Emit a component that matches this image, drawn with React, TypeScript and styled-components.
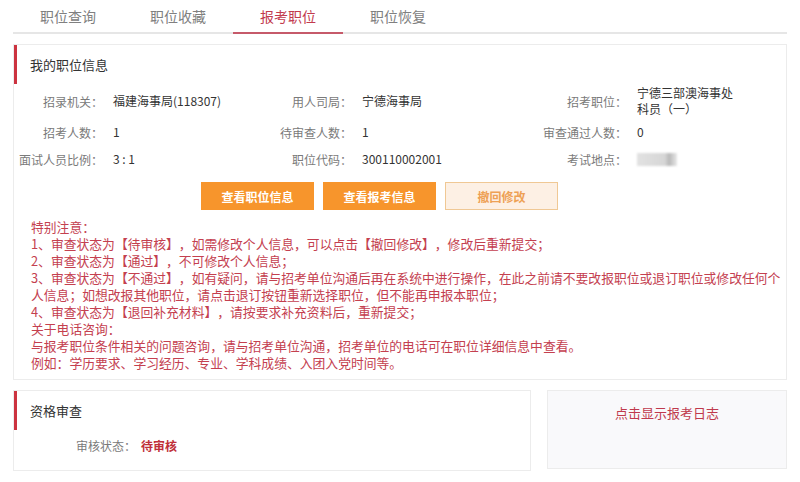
import React from "react";
import styled, { createGlobalStyle } from "styled-components";

const GlobalStyle = createGlobalStyle`
  html, body {
    margin: 0;
    padding: 0;
    background: #fff;
    font-family: "Noto Sans CJK SC", "Noto Sans", sans-serif;
    text-spacing-trim: space-all;
  }
`;

const tabs = ["职位查询", "职位收藏", "报考职位", "职位恢复"];

const info: { label: string; value: React.ReactNode }[][] = [
  [
    { label: "招录机关：", value: "福建海事局(118307)" },
    { label: "用人司局：", value: "宁德海事局" },
    {
      label: "招考职位：",
      value: (
        <>
          宁德三部澳海事处
          <br />
          科员（一）
        </>
      ),
    },
  ],
  [
    { label: "招考人数：", value: "1" },
    { label: "待审查人数：", value: "1" },
    { label: "审查通过人数：", value: "0" },
  ],
  [
    { label: "面试人员比例：", value: "3 : 1" },
    { label: "职位代码：", value: "300110002001" },
    { label: "考试地点：", value: <Blurred /> },
  ],
];

const notes = [
  "特别注意：",
  "1、审查状态为【待审核】，如需修改个人信息，可以点击【撤回修改】，修改后重新提交；",
  "2、审查状态为【通过】，不可修改个人信息；",
  "3、审查状态为【不通过】，如有疑问，请与招考单位沟通后再在系统中进行操作，在此之前请不要改报职位或退订职位或修改任何个人信息；如想改报其他职位，请点击退订按钮重新选择职位，但不能再申报本职位；",
  "4、审查状态为【退回补充材料】，请按要求补充资料后，重新提交；",
  "关于电话咨询：",
  "与报考职位条件相关的问题咨询，请与招考单位沟通，招考单位的电话可在职位详细信息中查看。",
  "例如：学历要求、学习经历、专业、学科成绩、入团入党时间等。",
];

export default function App() {
  return (
    <>
      <GlobalStyle />
      <Page>
        <TabBar>
          {tabs.map((t) => (
            <Tab key={t} active={t === "报考职位"}>
              {t}
            </Tab>
          ))}
        </TabBar>

        <Panel>
          <PanelHeader>我的职位信息</PanelHeader>
          <InfoGrid>
            {info.map((row) =>
              row.map((cell) => (
                <React.Fragment key={cell.label}>
                  <Label>{cell.label}</Label>
                  <Value>{cell.value}</Value>
                </React.Fragment>
              ))
            )}
          </InfoGrid>
          <Buttons>
            <Button>查看职位信息</Button>
            <Button>查看报考信息</Button>
            <Button light>撤回修改</Button>
          </Buttons>
          <Notice>
            {notes.map((n) => (
              <p key={n}>{n}</p>
            ))}
          </Notice>
        </Panel>

        <Bottom>
          <ReviewPanel>
            <PanelHeader>资格审查</PanelHeader>
            <StatusRow>
              <StatusLabel>审核状态：</StatusLabel>
              <StatusValue>待审核</StatusValue>
            </StatusRow>
          </ReviewPanel>
          <LogPanel>点击显示报考日志</LogPanel>
        </Bottom>
      </Page>
    </>
  );
}

function Blurred() {
  return <BlurBox />;
}

const Page = styled.div`
  padding: 0 13px;
  width: 774px;
`;

const TabBar = styled.div`
  display: flex;
  height: 32px;
  border-bottom: 2px solid #e6e6e6;
`;

const Tab = styled.div<{ active?: boolean }>`
  width: 110px;
  display: flex;
  align-items: center;
  justify-content: center;
  font-size: 14px;
  color: ${({ active }) => (active ? "#c23a4e" : "#808080")};
  box-shadow: ${({ active }) => (active ? "inset 0 -2px 0 #c65a6a" : "none")};
  margin-bottom: -2px;
  height: 34px;
  padding-bottom: 2px;
  box-sizing: border-box;
`;

const Panel = styled.div`
  margin-top: 10px;
  border: 1px solid #ececec;
`;

const PanelHeader = styled.div`
  height: 39px;
  display: flex;
  align-items: center;
  padding-left: 13px;
  border-left: 3px solid #cc3340;
  font-size: 13px;
  color: #333;
`;

const InfoGrid = styled.div`
  display: grid;
  grid-template-columns: 89px 150px 99px 165px 110px 1fr;
  grid-template-rows: 34px 28px 26px;
  align-items: center;
  font-size: 12px;
`;

const Label = styled.div`
  text-align: right;
  color: #7a7a7a;
  white-space: nowrap;
`;

const Value = styled.div`
  padding-left: 10px;
  color: #333;
  line-height: 16px;
  white-space: nowrap;
`;

const BlurBox = styled.span`
  display: block;
  width: 40px;
  height: 13px;
  background: linear-gradient(90deg, #e2e2e2 0%, #d6d6d6 70%, #b8b8b8 80%, #e8e8e8 100%);
  filter: blur(1px);
`;

const Buttons = styled.div`
  display: flex;
  gap: 9px;
  margin-top: 10px;
  padding-left: 187px;
`;

const Button = styled.div<{ light?: boolean }>`
  width: 113px;
  height: 28px;
  box-sizing: border-box;
  display: flex;
  align-items: center;
  justify-content: center;
  font-size: 12px;
  font-weight: bold;
  background: ${({ light }) => (light ? "#fdf0e4" : "#f7952c")};
  color: ${({ light }) => (light ? "#eea155" : "#fff")};
  border: 1px solid ${({ light }) => (light ? "#f0c894" : "#f7952c")};
`;

const Notice = styled.div`
  margin-top: 8px;
  padding: 0 0 8px 17px;
  width: 755px;
  font-size: 12.8px;
  line-height: 17px;
  color: #c4404f;

  p {
    margin: 0;
  }
`;

const Bottom = styled.div`
  display: flex;
  gap: 16px;
  margin-top: 10px;
  align-items: flex-start;
`;

const ReviewPanel = styled.div`
  width: 518px;
  height: 81px;
  box-sizing: border-box;
  border: 1px solid #ececec;
`;

const StatusRow = styled.div`
  display: flex;
  align-items: center;
  height: 30px;
  padding-left: 62px;
  font-size: 12px;
`;

const StatusLabel = styled.span`
  color: #7a7a7a;
  width: 65px;
`;

const StatusValue = styled.span`
  color: #c0303a;
  font-weight: bold;
`;

const LogPanel = styled.div`
  flex: 1;
  height: 79px;
  box-sizing: border-box;
  border: 1px solid #ececec;
  background: #f9f9fb;
  display: flex;
  justify-content: center;
  padding-top: 12px;
  font-size: 13px;
  color: #c0394d;
`;
